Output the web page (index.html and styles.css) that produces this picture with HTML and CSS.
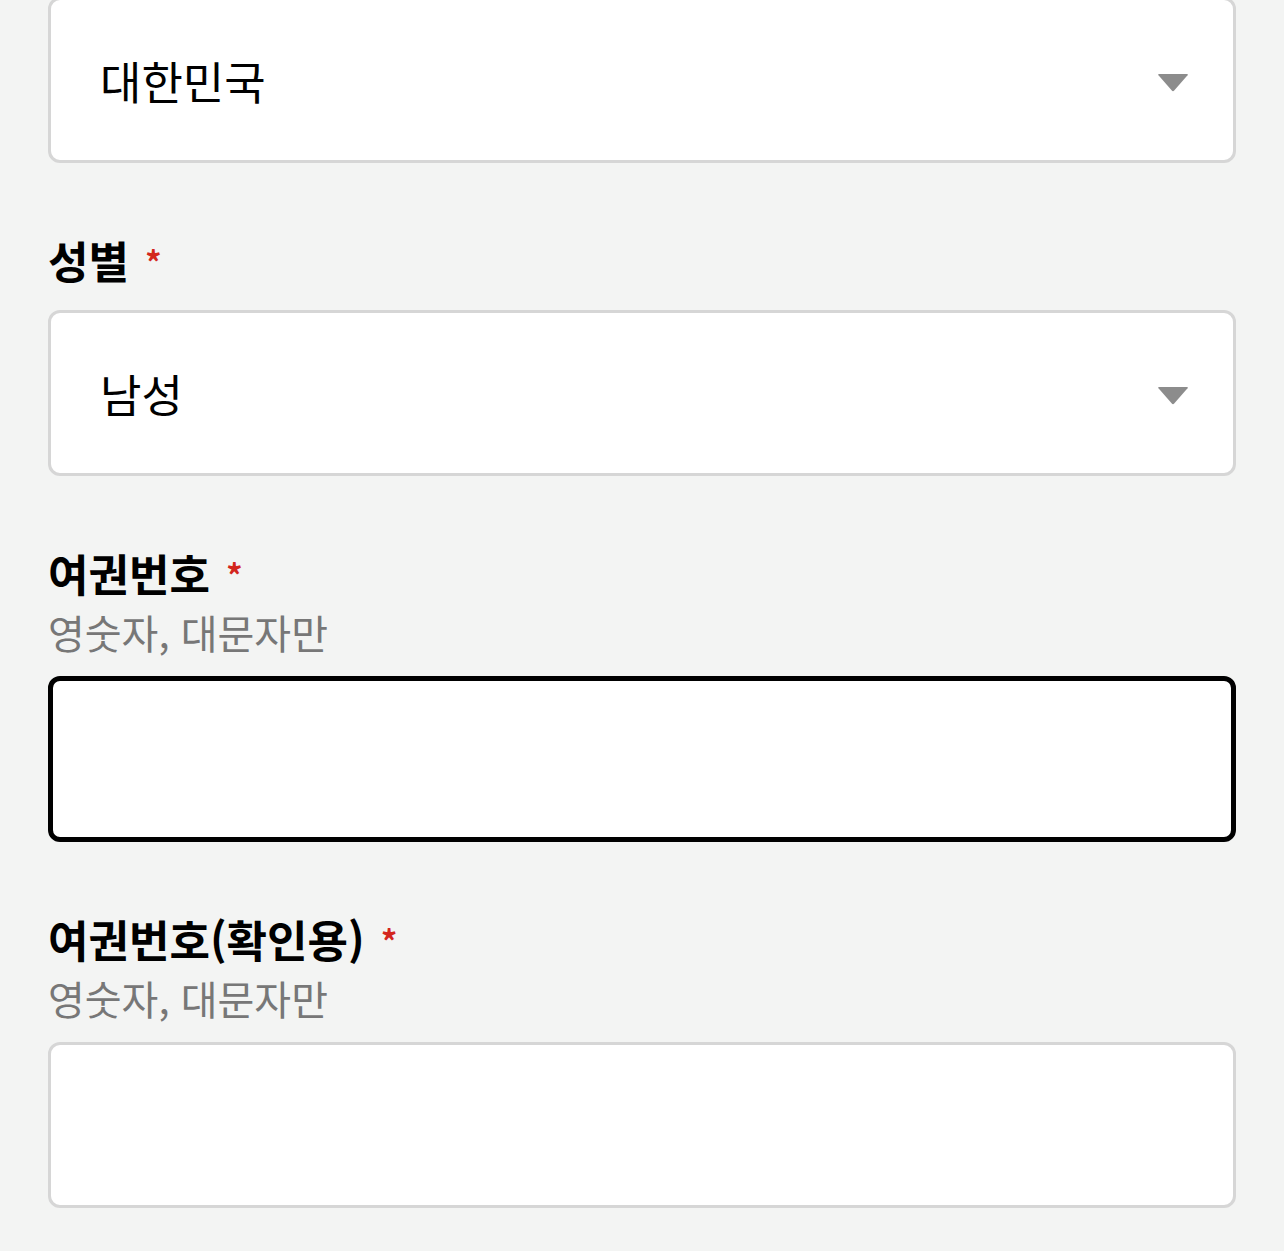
FILE: index.html
```html
<!DOCTYPE html>
<html lang="ko">

<head>
    <meta charset="UTF-8">
    <title>여권 정보</title>
    <link rel="stylesheet" href="styles.css">
</head>

<body>
    <div class="form">
        <div class="field field-first">
            <div class="select-box">
                <span class="select-value">대한민국</span>
                <svg class="select-arrow" width="32" height="19" viewBox="0 0 32 19">
                    <path d="M2 1 L30 1 Q31.5 1 30.5 2.3 L17.2 17.6 Q16 18.8 14.8 17.6 L1.5 2.3 Q0.5 1 2 1 Z" fill="#8c8c8c" />
                </svg>
            </div>
        </div>

        <div class="field">
            <label class="field-label">성별 <span class="required">*</span></label>
            <div class="select-box">
                <span class="select-value">남성</span>
                <svg class="select-arrow" width="32" height="19" viewBox="0 0 32 19">
                    <path d="M2 1 L30 1 Q31.5 1 30.5 2.3 L17.2 17.6 Q16 18.8 14.8 17.6 L1.5 2.3 Q0.5 1 2 1 Z" fill="#8c8c8c" />
                </svg>
            </div>
        </div>

        <div class="field">
            <label class="field-label" for="passport">여권번호 <span class="required">*</span></label>
            <div class="field-hint">영숫자, 대문자만</div>
            <input type="text" id="passport" class="text-input is-focused">
        </div>

        <div class="field">
            <label class="field-label" for="passport2">여권번호(확인용) <span class="required">*</span></label>
            <div class="field-hint">영숫자, 대문자만</div>
            <input type="text" id="passport2" class="text-input">
        </div>
    </div>
</body>

</html>
```

FILE: styles.css
```css
* {
    margin: 0;
    padding: 0;
    box-sizing: border-box;
}

body {
    font-family: "Noto Sans CJK KR", "Noto Sans", sans-serif;
    background-color: #f3f4f3;
    color: #000;
}

.form {
    padding: 0 48px;
}

.field-first {
    margin-top: -3px;
}

.field + .field {
    margin-top: 65px;
}

.field-label {
    display: block;
    font-size: 44px;
    font-weight: 700;
    line-height: 64px;
}

.field-label + .select-box {
    margin-top: 18px;
}

.required {
    color: #d3261d;
    font-size: 32px;
    line-height: 0;
    vertical-align: 4px;
    margin-left: 4px;
}

.field-hint {
    font-size: 40px;
    line-height: 54px;
    color: #777;
    margin-bottom: 17px;
}

.select-box {
    display: flex;
    align-items: center;
    justify-content: space-between;
    height: 166px;
    padding: 0 44px 0 49px;
    background-color: #fff;
    border: 3px solid #d6d6d6;
    border-radius: 12px;
}

.select-value {
    font-size: 45px;
    line-height: 1;
}

.select-arrow {
    display: block;
    margin-top: 4px;
}

.text-input {
    display: block;
    width: 100%;
    height: 166px;
    padding: 0 49px;
    font-family: inherit;
    font-size: 45px;
    background-color: #fff;
    border: 3px solid #d6d6d6;
    border-radius: 12px;
    outline: none;
}

.text-input.is-focused {
    border: 5px solid #000;
}
```
